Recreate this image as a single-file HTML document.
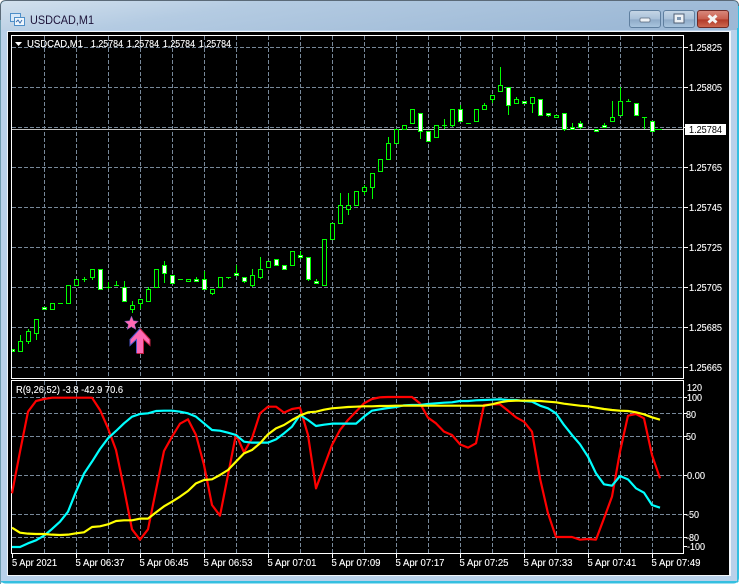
<!DOCTYPE html>
<html><head><meta charset="utf-8"><style>
html,body{margin:0;padding:0;background:#fff;width:741px;height:584px;overflow:hidden}
svg{display:block}
text{font-family:"Liberation Sans",sans-serif;font-size:10.5px;fill:#fff;stroke:#fff;stroke-width:.12}
</style></head><body>
<svg width="741" height="584" viewBox="0 0 741 584" xmlns="http://www.w3.org/2000/svg">
<defs>
<linearGradient id="tb" x1="0" y1="0" x2="1" y2="0.25"><stop offset="0" stop-color="#d3e1ee"/><stop offset=".35" stop-color="#b4cbe2"/><stop offset="1" stop-color="#9db9d6"/></linearGradient>
<linearGradient id="bt" x1="0" y1="0" x2="0" y2="1"><stop offset="0" stop-color="#c6d6e6"/><stop offset=".5" stop-color="#a9c1d9"/><stop offset=".55" stop-color="#8fabc8"/><stop offset="1" stop-color="#aac6df"/></linearGradient>
<linearGradient id="cl" x1="0" y1="0" x2="0" y2="1"><stop offset="0" stop-color="#d98a7e"/><stop offset=".5" stop-color="#c9604f"/><stop offset=".55" stop-color="#b13a28"/><stop offset="1" stop-color="#cf6a52"/></linearGradient>
</defs>
<!-- window -->
<rect x="0.5" y="1" width="738" height="582" rx="5" fill="#b9d1ea" stroke="#35bfe0"/>
<path d="M0.5 584V6Q0.5 0.5 6 0.5H733Q738.5 .5 738.5 6" fill="none" stroke="#5b6a78"/>
<path d="M1 30V6Q1 1 6 1H733Q738 1 738 6V30z" fill="url(#tb)"/>
<rect x="1" y="30" width="737" height="552" fill="#b9d1ea"/>
<rect x="1" y="581" width="737" height="1.5" fill="#35bfe0"/>
<rect x="737" y="28" width="1.5" height="554" fill="#35bfe0"/>
<rect x="0" y="20" width="1" height="564" fill="#6f9db0"/>
<rect x="7" y="31" width="724" height="545" fill="#f2f6fa"/>
<rect x="8" y="32" width="721" height="543" fill="#000"/>
<!-- title -->
<rect x="10.5" y="13.5" width="10" height="8" fill="#d8e8f8" stroke="#4f8fc8"/>
<rect x="14.5" y="17.5" width="10" height="8" fill="#eef5fc" stroke="#4f8fc8"/>
<path d="M16 22l2-2 2 3 2-3" fill="none" stroke="#3a70b0"/>
<text x="30" y="24" style="font-size:12px;fill:#1c1238;stroke:none" textLength="64" lengthAdjust="spacingAndGlyphs">USDCAD,M1</text>
<!-- buttons -->
<rect x="629.5" y="10.5" width="31" height="17" rx="2.5" fill="url(#bt)" stroke="#5f7f9f"/>
<rect x="663.5" y="10.5" width="31" height="17" rx="2.5" fill="url(#bt)" stroke="#5f7f9f"/>
<rect x="697.5" y="10.5" width="31" height="17" rx="2.5" fill="url(#cl)" stroke="#6e2a26"/>
<rect x="640" y="18" width="10" height="4" rx="1" fill="#eef2f6" stroke="#56657a" stroke-width=".7"/>
<rect x="674" y="14" width="10" height="9" fill="#eef2f6" stroke="#4e5e74"/>
<rect x="677" y="17" width="4" height="3" fill="#7e97b2"/>
<path d="M708.5 15.5l8 7M716.5 15.5l-8 7" stroke="#f4f4f4" stroke-width="3" fill="none"/>
<!-- grid -->
<g shape-rendering="crispEdges" stroke="#778899" fill="none" stroke-dasharray="4 2">
<path d="M12 47.5H683M12 87.5H683M12 127.5H683M12 167.5H683M12 207.5H683M12 247.5H683M12 287.5H683M12 327.5H683M12 367.5H683"/>
<path d="M44.5 36V378M76.5 36V378M108.5 36V378M140.5 36V378M172.5 36V378M204.5 36V378M236.5 36V378M268.5 36V378M300.5 36V378M332.5 36V378M364.5 36V378M396.5 36V378M428.5 36V378M460.5 36V378M492.5 36V378M524.5 36V378M556.5 36V378M588.5 36V378M620.5 36V378M652.5 36V378"/>
<path d="M12 397.5H683M12 413.5H683M12 436.5H683M12 475.5H683M12 514.5H683M12 537.5H683"/>
<path d="M44.5 381V553M76.5 381V553M108.5 381V553M140.5 381V553M172.5 381V553M204.5 381V553M236.5 381V553M268.5 381V553M300.5 381V553M332.5 381V553M364.5 381V553M396.5 381V553M428.5 381V553M460.5 381V553M492.5 381V553M524.5 381V553M556.5 381V553M588.5 381V553M620.5 381V553M652.5 381V553"/>
</g>
<!-- bid line -->
<path d="M12 129.5H683" stroke="#c0c0c0" shape-rendering="crispEdges"/>
<!-- candles -->
<g shape-rendering="crispEdges" stroke="#00ff00" fill="none">
<path d="M20.5 335V341M28.5 329V331M28.5 341V344M36.5 333V340M58 303.5h5M82 279.5h5M84.5 277V282M92.5 277V280M106 287.5h5M108.5 282V289M114 285.5h5M116.5 281V285M124.5 281V287M132.5 301V305M132.5 309V313M140.5 303V309M148.5 287V289M164.5 261V265M164.5 273V283M178 279.5h5M196.5 277V279M204.5 271V279M212.5 293V295M226 277.5h5M228.5 277V279M236.5 265V273M244.5 281V283M252.5 269V275M252.5 285V287M260.5 257V269M260.5 277V279M300.5 251V259M308.5 279V281M316.5 279V281M340.5 193V205M348.5 193V205M348.5 209V215M364.5 185V187M364.5 191V195M372.5 187V199M388.5 137V143M420.5 131V139M442 125.5h5M444.5 119V129M452.5 125V127M460.5 105V109M466 123.5h5M484.5 103V105M492.5 99V103M500.5 67V85M508.5 105V115M516.5 97V99M532.5 103V113M548.5 115V117M564.5 129V131M572.5 123V127M580.5 121V129M604.5 123V125M612.5 101V117M620.5 87V101M626 101.5h5M628.5 99V101M642 117.5h5M644.5 117V129M654 129.5h8"/>
<path d="M18.5 341.5h4v10h-4zM26.5 331.5h4v10h-4zM34.5 319.5h4v14h-4zM50.5 303.5h4v6h-4zM66.5 285.5h4v18h-4zM74.5 279.5h4v6h-4zM90.5 269.5h4v8h-4zM130.5 305.5h4v4h-4zM138.5 299.5h4v4h-4zM146.5 289.5h4v12h-4zM154.5 269.5h4v18h-4zM186.5 279.5h4v2h-4zM210.5 289.5h4v4h-4zM218.5 277.5h4v10h-4zM250.5 275.5h4v10h-4zM258.5 269.5h4v8h-4zM266.5 261.5h4v6h-4zM290.5 251.5h4v14h-4zM322.5 239.5h4v46h-4zM330.5 223.5h4v16h-4zM338.5 205.5h4v18h-4zM346.5 205.5h4v4h-4zM354.5 191.5h4v14h-4zM362.5 187.5h4v4h-4zM370.5 173.5h4v14h-4zM378.5 159.5h4v12h-4zM386.5 143.5h4v16h-4zM394.5 129.5h4v14h-4zM402.5 125.5h4v4h-4zM410.5 109.5h4v14h-4zM434.5 125.5h4v12h-4zM450.5 109.5h4v16h-4zM474.5 109.5h4v12h-4zM482.5 105.5h4v4h-4zM490.5 95.5h4v4h-4zM498.5 85.5h4v6h-4zM514.5 99.5h4v4h-4zM530.5 97.5h4v6h-4zM554.5 115.5h4v2h-4zM610.5 117.5h4v4h-4zM618.5 101.5h4v14h-4z" fill="#000"/>
<path fill="#fff" d="M12.5 349.5h2v2h-2zM42.5 307.5h4v2h-4zM98.5 269.5h4v20h-4zM122.5 287.5h4v14h-4zM162.5 265.5h4v8h-4zM170.5 275.5h4v8h-4zM194.5 279.5h4v2h-4zM202.5 279.5h4v10h-4zM234.5 273.5h4v2h-4zM242.5 277.5h4v4h-4zM274.5 259.5h4v6h-4zM282.5 265.5h4v4h-4zM298.5 255.5h4v2h-4zM306.5 257.5h4v22h-4zM314.5 281.5h4v2h-4zM418.5 113.5h4v18h-4zM426.5 131.5h4v10h-4zM458.5 109.5h4v12h-4zM506.5 87.5h4v18h-4zM522.5 101.5h4v2h-4zM538.5 99.5h4v16h-4zM546.5 113.5h4v2h-4zM562.5 113.5h4v16h-4zM570.5 127.5h4v2h-4zM578.5 123.5h4v4h-4zM594.5 129.5h4v2h-4zM602.5 125.5h4v2h-4zM634.5 103.5h4v12h-4zM650.5 121.5h4v10h-4z"/>
</g>
<!-- star + arrow -->
<path d="M131.5 316l2 4.800 5 .4-3.800 3.300 1.200 5-4.400-2.700-4.400 2.700 1.200-5-3.800-3.300 5-.4z" fill="#ff69b4" stroke="#5a4fb0" stroke-width=".5"/>
<path d="M140 328.500L150 339.500V345.500L143.500 339.500V353.500H136.500V339.500L130 345.500V339.500z" fill="#ff69b4"/>
<path d="M140 328.500L130 339.500V345.500L136.500 339.500V353" fill="none" stroke="#4a55c8"/>
<path d="M140 328.500L150 339.500V345.500L143.500 339.500V353.500H137" fill="none" stroke="#c02040"/>
<!-- frames -->
<g shape-rendering="crispEdges" stroke="#fff" fill="none">
<rect x="11.5" y="35.500" width="672" height="343"/>
<rect x="11.5" y="380.500" width="672" height="173"/>
<path d="M684 47.500h4M684 87.500h4M684 127.500h4M684 167.500h4M684 207.500h4M684 247.500h4M684 287.500h4M684 327.500h4M684 367.500h4M684 397.500h3M684 413.500h3M684 436.500h3M684 475.500h3M684 514.500h3M684 537.500h3M684 546.500h3M12.500 554v4M76.500 554v4M140.500 554v4M204.500 554v4M268.500 554v4M332.500 554v4M396.500 554v4M460.500 554v4M524.500 554v4M588.500 554v4M652.500 554v4"/>
</g>
<!-- indicator lines -->
<g transform="scale(.33333)" fill="none" stroke-width="6.6" stroke-linejoin="round">
<g transform="translate(0,1125)">
<polyline stroke="#ff0000" points="36,355 60,230 84,110 108,78 132,72 156,68 180,68 204,68 228,68 252,68 276,68 300,105 324,160 348,225 372,340 396,463 420,494 444,463 468,345 492,228 516,185 540,146 564,133 588,180 612,270 636,390 660,422 684,300 708,178 732,232 756,190 780,115 804,95 828,95 852,113 876,102 900,98 924,180 948,340 972,275 996,210 1020,165 1044,135 1068,110 1092,85 1116,72 1140,67 1164,66 1188,66 1212,66 1236,66 1260,85 1284,128 1308,145 1332,170 1356,180 1380,208 1404,218 1428,205 1452,90 1476,88 1500,88 1524,107 1548,127 1572,140 1596,170 1620,310 1644,415 1668,486 1692,486 1716,486 1740,494 1764,492 1788,494 1812,430 1836,365 1860,230 1884,122 1908,117 1932,130 1956,240 1980,310"/>
<polyline stroke="#00ffff" points="36,516 60,516 84,505 108,496 132,482 156,462 180,440 204,410 228,350 252,296 276,260 300,222 324,190 348,168 372,145 396,125 420,117 444,115 468,108 492,107 516,107 540,110 564,115 588,125 612,145 636,165 660,167 684,173 708,180 732,200 756,203 780,203 804,203 828,193 852,175 876,155 900,120 924,135 948,153 972,149 996,146 1020,146 1044,146 1068,146 1092,125 1116,107 1140,103 1164,99 1188,96 1212,91 1236,90 1260,90 1284,87 1308,85 1332,83 1356,82 1380,78 1404,78 1428,76 1452,75 1476,74 1500,73 1524,75 1548,75 1572,78 1596,80 1620,92 1644,100 1668,115 1692,150 1716,180 1740,208 1764,245 1788,295 1812,328 1836,332 1860,303 1884,313 1908,340 1932,353 1956,390 1980,398"/>
<polyline stroke="#ffff00" points="36,458 60,473 84,476 108,477 132,477 156,479 180,480 204,479 228,475 252,472 276,456 300,454 324,448 348,438 372,436 396,436 420,431 444,431 468,412 492,394 516,380 540,365 564,348 588,325 612,315 636,313 660,300 684,285 708,260 732,235 756,225 780,205 804,178 828,160 852,150 876,135 900,122 924,112 948,110 972,104 996,100 1020,98 1044,96 1068,95 1092,94 1116,94 1140,93 1164,93 1188,92 1212,92 1236,92 1260,92 1284,92 1308,92 1332,92 1356,92 1380,92 1404,92 1428,92 1452,92 1476,88 1500,82 1524,78 1548,77 1572,77 1596,77 1620,78 1644,80 1668,82 1692,86 1716,89 1740,92 1764,94 1788,98 1812,102 1836,105 1860,107 1884,108 1908,112 1932,118 1956,127 1980,134"/>
</g></g>
<!-- legends -->
<path d="M15 42h7l-3.500 4z" fill="#fff"/>
<text x="27" y="47" textLength="56" lengthAdjust="spacingAndGlyphs">USDCAD,M1</text>
<text x="91" y="47" textLength="32" lengthAdjust="spacingAndGlyphs">1.25784</text>
<text x="127" y="47" textLength="32" lengthAdjust="spacingAndGlyphs">1.25784</text>
<text x="163" y="47" textLength="32" lengthAdjust="spacingAndGlyphs">1.25784</text>
<text x="199" y="47" textLength="32" lengthAdjust="spacingAndGlyphs">1.25784</text>
<text x="16" y="393" textLength="107" lengthAdjust="spacingAndGlyphs">R(9,26,52) -3.8 -42.9 70.6</text>
<!-- price axis -->
<g>
<text x="689" y="51" textLength="33" lengthAdjust="spacingAndGlyphs">1.25825</text>
<text x="689" y="91" textLength="33" lengthAdjust="spacingAndGlyphs">1.25805</text>
<text x="689" y="171" textLength="33" lengthAdjust="spacingAndGlyphs">1.25765</text>
<text x="689" y="211" textLength="33" lengthAdjust="spacingAndGlyphs">1.25745</text>
<text x="689" y="251" textLength="33" lengthAdjust="spacingAndGlyphs">1.25725</text>
<text x="689" y="291" textLength="33" lengthAdjust="spacingAndGlyphs">1.25705</text>
<text x="689" y="331" textLength="33" lengthAdjust="spacingAndGlyphs">1.25685</text>
<text x="689" y="371" textLength="33" lengthAdjust="spacingAndGlyphs">1.25665</text>
</g>
<rect x="685" y="124" width="41" height="11" fill="#fff"/>
<text x="689" y="133" textLength="33" lengthAdjust="spacingAndGlyphs" style="fill:#000;stroke:none">1.25784</text>
<!-- indicator axis -->
<text x="687" y="391" textLength="15" lengthAdjust="spacingAndGlyphs">120</text>
<text x="687" y="401" textLength="15" lengthAdjust="spacingAndGlyphs">100</text>
<text x="686" y="418" textLength="10" lengthAdjust="spacingAndGlyphs">80</text>
<text x="686" y="440" textLength="10" lengthAdjust="spacingAndGlyphs">50</text>
<text x="687" y="479" textLength="18" lengthAdjust="spacingAndGlyphs">0.00</text>
<text x="686" y="518" textLength="13" lengthAdjust="spacingAndGlyphs">-50</text>
<text x="686" y="541" textLength="13" lengthAdjust="spacingAndGlyphs">-80</text>
<text x="687" y="550" textLength="18" lengthAdjust="spacingAndGlyphs">-100</text>
<!-- time axis -->
<text x="12" y="566" textLength="45" lengthAdjust="spacingAndGlyphs">5 Apr 2021</text>
<text x="75.500" y="566" textLength="49" lengthAdjust="spacingAndGlyphs">5 Apr 06:37</text>
<text x="139.500" y="566" textLength="49" lengthAdjust="spacingAndGlyphs">5 Apr 06:45</text>
<text x="203.500" y="566" textLength="49" lengthAdjust="spacingAndGlyphs">5 Apr 06:53</text>
<text x="267.500" y="566" textLength="49" lengthAdjust="spacingAndGlyphs">5 Apr 07:01</text>
<text x="331.500" y="566" textLength="49" lengthAdjust="spacingAndGlyphs">5 Apr 07:09</text>
<text x="395.500" y="566" textLength="49" lengthAdjust="spacingAndGlyphs">5 Apr 07:17</text>
<text x="459.500" y="566" textLength="49" lengthAdjust="spacingAndGlyphs">5 Apr 07:25</text>
<text x="523.500" y="566" textLength="49" lengthAdjust="spacingAndGlyphs">5 Apr 07:33</text>
<text x="587.500" y="566" textLength="49" lengthAdjust="spacingAndGlyphs">5 Apr 07:41</text>
<text x="651.500" y="566" textLength="49" lengthAdjust="spacingAndGlyphs">5 Apr 07:49</text>
</svg>
</body></html>
